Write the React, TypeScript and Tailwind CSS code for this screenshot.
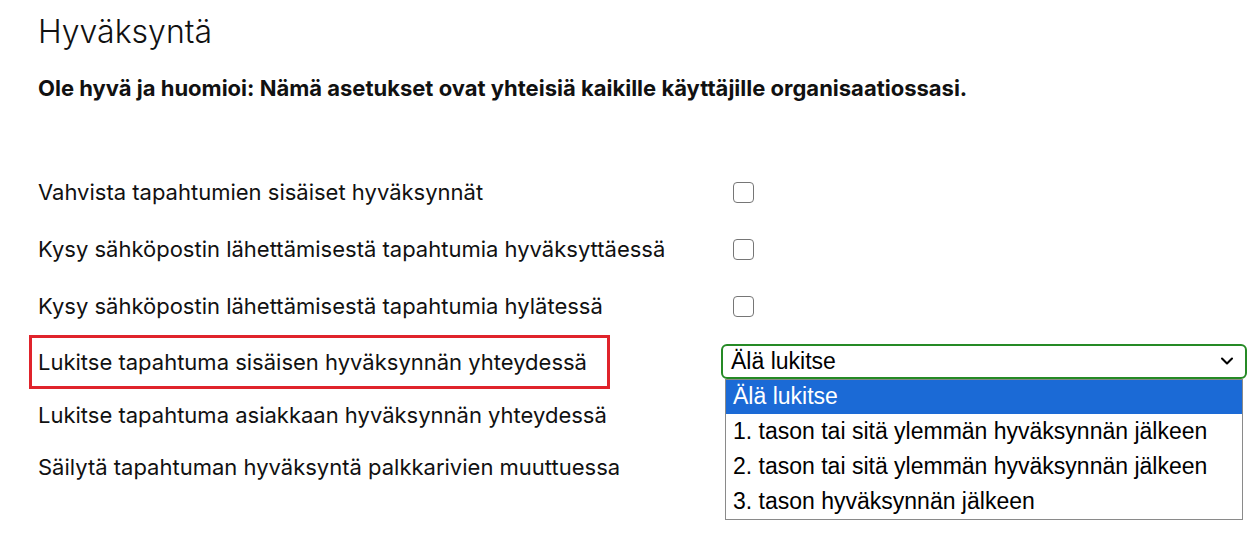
import { ChevronDown } from 'lucide-react';

const checkboxRows = [
  'Vahvista tapahtumien sisäiset hyväksynnät',
  'Kysy sähköpostin lähettämisestä tapahtumia hyväksyttäessä',
  'Kysy sähköpostin lähettämisestä tapahtumia hylätessä',
];

const lockOptions = [
  'Älä lukitse',
  '1. tason tai sitä ylemmän hyväksynnän jälkeen',
  '2. tason tai sitä ylemmän hyväksynnän jälkeen',
  '3. tason hyväksynnän jälkeen',
];

export default function App() {
  return (
    <main className="min-h-screen w-[1250px] bg-white pl-[38px] pt-[12px] text-[#111] font-['Inter',sans-serif]">
      <h1 className="text-[32px] font-light leading-[40px]">Hyväksyntä</h1>
      <p className="mt-[22px] text-[22px] font-bold leading-[28px]">
        Ole hyvä ja huomioi: Nämä asetukset ovat yhteisiä kaikille käyttäjille organisaatiossasi.
      </p>

      <div className="mt-[62px] flex flex-col">
        {checkboxRows.map((label) => (
          <div key={label} className="flex h-[57px] items-center">
            <span className="w-[683px] text-[22px]">{label}</span>
            <div className="ml-[12px] h-[21px] w-[21px] rounded-[4px] border-[1.5px] border-[#767676] bg-white" />
          </div>
        ))}

        <div className="-ml-[9px] flex h-[54px] items-center">
          <div className="flex h-full w-[581px] items-center border-[3px] border-[#e0232b] pl-[6px]">
            <span className="text-[22px]">Lukitse tapahtuma sisäisen hyväksynnän yhteydessä</span>
          </div>
          <div className="relative -mt-[2px] ml-[111px] w-[526px]">
            <div className="flex h-[35px] items-center justify-between rounded-[6px] border-2 border-[#258a25] pl-[8px] pr-[8px] font-['Liberation_Sans',Arial,sans-serif] text-[23px] text-black">
              <span>Älä lukitse</span>
              <ChevronDown size={20} strokeWidth={2.5} />
            </div>
            <div className="absolute left-[4px] right-[4px] top-[35px] z-10 border border-[#8a8a8a] bg-white font-['Liberation_Sans',Arial,sans-serif] text-[23px] text-black">
              {lockOptions.map((opt, i) => (
                <div
                  key={opt}
                  className={
                    i === 0
                      ? 'flex h-[34px] items-center bg-[#1b6ad6] px-[7px] text-white'
                      : 'flex h-[35px] items-center px-[7px]'
                  }
                >
                  {opt}
                </div>
              ))}
            </div>
          </div>
        </div>

        <div className="flex h-[52px] items-center">
          <span className="text-[22px]">Lukitse tapahtuma asiakkaan hyväksynnän yhteydessä</span>
        </div>
        <div className="flex h-[52px] items-center">
          <span className="text-[22px]">Säilytä tapahtuman hyväksyntä palkkarivien muuttuessa</span>
        </div>
      </div>
    </main>
  );
}
